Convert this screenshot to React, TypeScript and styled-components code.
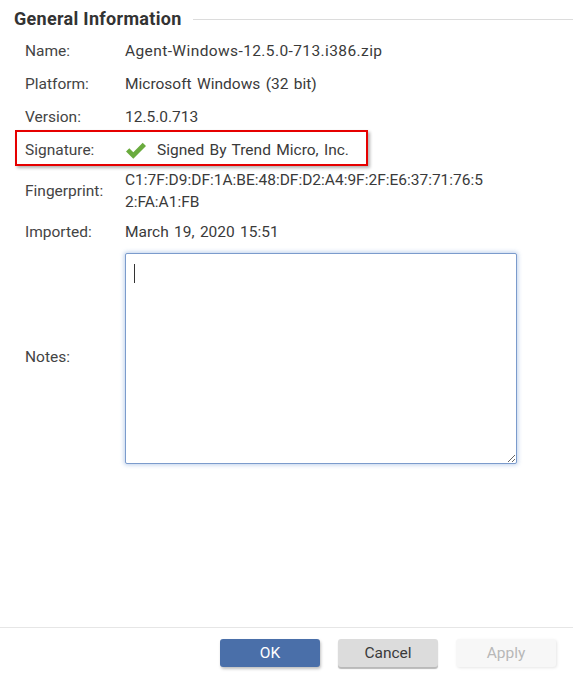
import React from "react";
import styled, { createGlobalStyle } from "styled-components";

const GlobalStyle = createGlobalStyle`
    html, body {
        margin: 0;
        padding: 0;
        background: #ffffff;
    }
    body {
        font-family: Roboto, "Liberation Sans", Arial, sans-serif;
        color: #3a3a3a;
    }
`;

const Dialog = styled.div`
    display: flex;
    flex-direction: column;
    width: 573px;
    height: 682px;
    box-sizing: border-box;
`;

const Content = styled.div`
    flex: 1;
`;

const SectionHeader = styled.div`
    display: flex;
    align-items: center;
    gap: 11px;
    padding: 8px 0 0 14px;
`;

const SectionTitle = styled.h2`
    margin: 0;
    font-size: 18px;
    line-height: 22px;
    font-weight: 700;
    letter-spacing: 0.3px;
    color: #333;
`;

const Rule = styled.div`
    flex: 1;
    height: 1px;
    background: #dcdcdc;
`;

const Rows = styled.div`
    display: flex;
    flex-direction: column;
    padding: 5px 0 0 25px;
`;

const Row = styled.div<{ $tight?: boolean }>`
    position: relative;
    display: flex;
    align-items: center;
    padding: ${({ $tight }) => ($tight ? "3px 0" : "5.75px 0")};
    font-size: 15.5px;
    line-height: 21.5px;
    word-spacing: 1.5px;
`;

const Highlight = styled.span`
    position: absolute;
    left: -10px;
    top: -4px;
    width: 353px;
    height: 36px;
    box-sizing: border-box;
    border: 2px solid #e60000;
    box-shadow: 2px 2px 3px rgba(0, 0, 0, 0.3);
    pointer-events: none;
`;

const Label = styled.div`
    width: 100px;
    flex-shrink: 0;
    color: #444;
`;

const Value = styled.div<{ $width?: number; $spread?: boolean }>`
    display: flex;
    align-items: center;
    gap: 10px;
    width: ${({ $width }) => $width ?? 392}px;
    color: #3a3a3a;
    letter-spacing: ${({ $spread }) => ($spread ? "0.4px" : "normal")};
    word-break: break-all;
`;

const NoteField = styled.div`
    position: relative;
    margin-top: 1px;
`;

const Notes = styled.textarea`
    display: block;
    width: 392px;
    height: 211px;
    box-sizing: border-box;
    padding: 8px;
    border: 1px solid #7b9bcc;
    border-radius: 2px;
    box-shadow: 0 0 4px 1px rgba(110, 150, 210, 0.45);
    font-family: inherit;
    font-size: 15px;
    color: #333;
    outline: none;
    resize: both;
`;

const Caret = styled.span`
    position: absolute;
    left: 9px;
    top: 11px;
    width: 1px;
    height: 19px;
    background: #333;
    pointer-events: none;
`;

const Footer = styled.div`
    display: flex;
    justify-content: flex-end;
    gap: 18px;
    padding: 11px 17px 15px 0;
    border-top: 1px solid #e6e6e6;
`;

const Button = styled.button<{ $variant: "primary" | "default" | "disabled" }>`
    width: 100px;
    height: 28px;
    border: none;
    border-radius: 3px;
    font-family: inherit;
    font-size: 15.5px;
    cursor: pointer;
    background: ${({ $variant }) =>
        $variant === "primary" ? "#4a6fa9" : $variant === "default" ? "#dcdcdc" : "#f7f7f7"};
    color: ${({ $variant }) =>
        $variant === "primary" ? "#ffffff" : $variant === "default" ? "#3a3a3a" : "#b8b8b8"};
    box-shadow: ${({ $variant }) =>
        $variant === "primary"
            ? "1px 2px 3px rgba(0, 0, 0, 0.25)"
            : $variant === "default"
            ? "0 2px 1px #b9b9b9"
            : "1px 1px 3px rgba(0, 0, 0, 0.1)"};
`;

const CheckIcon = () => (
    <svg width="22" height="17" viewBox="0 0 22 17">
        <path d="M1 9.5 L4.3 6.2 L8.3 10.2 L17.7 0.8 L21 4.1 L8.3 16.8 Z" fill="#6aab3e" />
    </svg>
);

const App: React.FC = () => {
    return (
        <>
            <GlobalStyle />
            <Dialog>
                <Content>
                    <SectionHeader>
                        <SectionTitle>General Information</SectionTitle>
                        <Rule />
                    </SectionHeader>
                    <Rows>
                        <Row>
                            <Label>Name:</Label>
                            <Value $spread>Agent-Windows-12.5.0-713.i386.zip</Value>
                        </Row>
                        <Row>
                            <Label>Platform:</Label>
                            <Value>Microsoft Windows (32 bit)</Value>
                        </Row>
                        <Row>
                            <Label>Version:</Label>
                            <Value>12.5.0.713</Value>
                        </Row>
                        <Row>
                            <Highlight />
                            <Label>Signature:</Label>
                            <Value>
                                <CheckIcon />
                                Signed By Trend Micro, Inc.
                            </Value>
                        </Row>
                        <Row $tight>
                            <Label>Fingerprint:</Label>
                            <Value $width={362}>C1:7F:D9:DF:1A:BE:48:DF:D2:A4:9F:2F:E6:37:71:76:52:FA:A1:FB</Value>
                        </Row>
                        <Row>
                            <Label>Imported:</Label>
                            <Value>March 19, 2020 15:51</Value>
                        </Row>
                        <Row $tight>
                            <Label>Notes:</Label>
                            <NoteField>
                                <Notes />
                                <Caret />
                            </NoteField>
                        </Row>
                    </Rows>
                </Content>
                <Footer>
                    <Button $variant="primary">OK</Button>
                    <Button $variant="default">Cancel</Button>
                    <Button $variant="disabled" disabled>
                        Apply
                    </Button>
                </Footer>
            </Dialog>
        </>
    );
};

export default App;
